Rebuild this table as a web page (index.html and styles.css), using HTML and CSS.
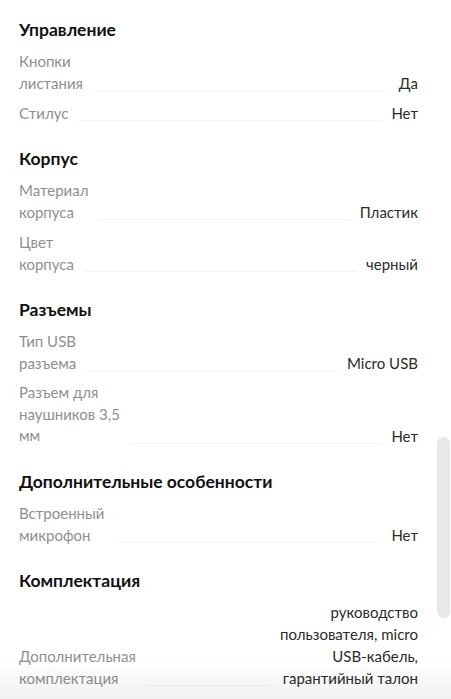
FILE: index.html
```html
<!DOCTYPE html>
<html lang="ru">
<head>
    <meta charset="UTF-8">
    <meta name="viewport" content="width=device-width, initial-scale=1.0">
    <title>Характеристики</title>
    <link rel="stylesheet" href="styles.css">
</head>
<body>
    <div class="specs">
        <section class="group">
            <h3 class="group-title">Управление</h3>
            <div class="row">
                <span class="label">Кнопки<br>листания</span>
                <span class="dots"></span>
                <span class="value">Да</span>
            </div>
            <div class="row">
                <span class="label">Стилус</span>
                <span class="dots"></span>
                <span class="value">Нет</span>
            </div>
        </section>

        <section class="group">
            <h3 class="group-title">Корпус</h3>
            <div class="row">
                <span class="label">Материал<br>корпуса</span>
                <span class="dots"></span>
                <span class="value">Пластик</span>
            </div>
            <div class="row">
                <span class="label">Цвет<br>корпуса</span>
                <span class="dots"></span>
                <span class="value">черный</span>
            </div>
        </section>

        <section class="group">
            <h3 class="group-title">Разъемы</h3>
            <div class="row">
                <span class="label">Тип USB<br>разъема</span>
                <span class="dots"></span>
                <span class="value">Micro USB</span>
            </div>
            <div class="row">
                <span class="label tight">Разъем для<br>наушников 3,5<br>мм</span>
                <span class="dots"></span>
                <span class="value">Нет</span>
            </div>
        </section>

        <section class="group">
            <h3 class="group-title">Дополнительные особенности</h3>
            <div class="row">
                <span class="label">Встроенный<br>микрофон</span>
                <span class="dots"></span>
                <span class="value">Нет</span>
            </div>
        </section>

        <section class="group">
            <h3 class="group-title">Комплектация</h3>
            <div class="row">
                <span class="label">Дополнительная<br>комплектация</span>
                <span class="dots"></span>
                <span class="value">руководство<br>пользователя, micro<br>USB-кабель,<br>гарантийный талон</span>
            </div>
        </section>
    </div>

    <div class="fade"></div>
    <div class="scroll-thumb"></div>
</body>
</html>
```

FILE: styles.css
```css
/* Page */
body {
    margin: 0;
    background: #fff;
    font-family: Lato, "Noto Sans", sans-serif;
    color: #222;
}

.specs {
    padding: 19px 33px 40px 19px;
}

/* Groups */
.group + .group {
    margin-top: 24px;
}

.group-title {
    margin: 0 0 9px;
    font-size: 17.5px;
    line-height: 22px;
    font-weight: bold;
    color: #111;
}

/* Rows */
.row {
    display: flex;
    align-items: flex-end;
    font-size: 15px;
    line-height: 22px;
}

.row + .row {
    margin-top: 8px;
}

.label {
    color: #8f8f8f;
}

.label.tight {
    line-height: 21.5px;
}

.dots {
    flex: 1;
    height: 1px;
    margin: 0 9px 3px;
    background: #f4f4f4;
}

.value {
    color: #2b2b2b;
    text-align: right;
}

/* Overlays */
.fade {
    position: fixed;
    left: 0;
    right: 0;
    bottom: 0;
    height: 38px;
    background: linear-gradient(rgba(0, 0, 0, 0), rgba(0, 0, 0, 0.06));
    pointer-events: none;
}

.scroll-thumb {
    position: fixed;
    top: 437px;
    right: 1px;
    width: 13px;
    height: 181px;
    border-radius: 6px;
    background: #e8e8e8;
}
```
